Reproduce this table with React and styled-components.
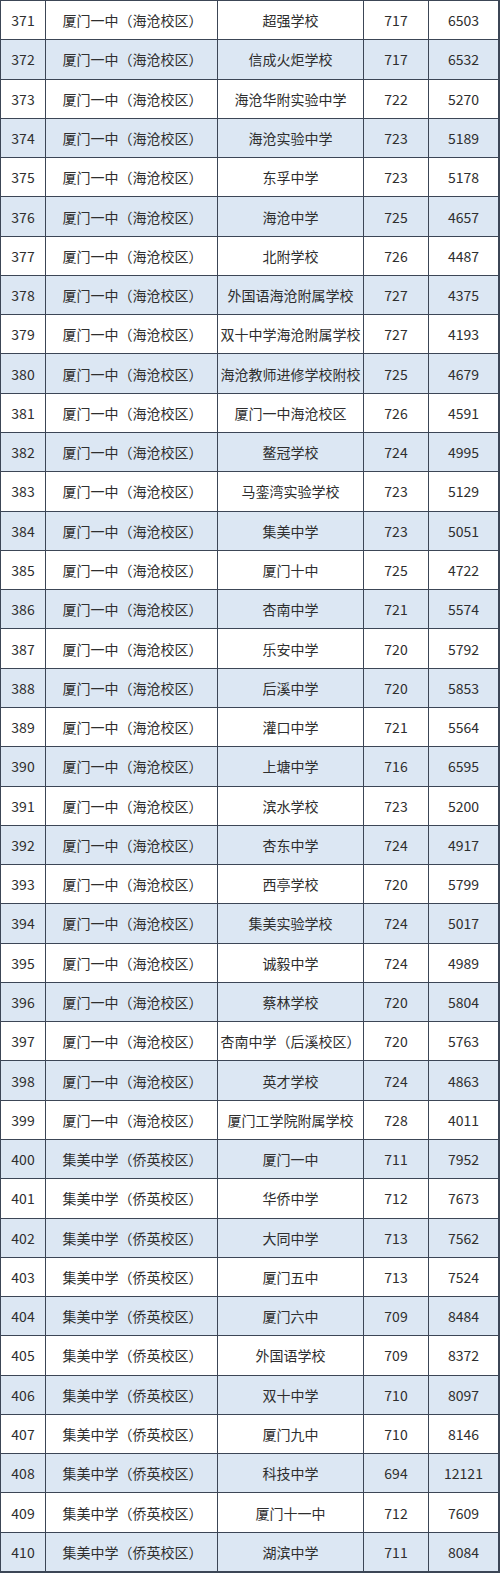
import React from "react";
import styled, { createGlobalStyle } from "styled-components";

const Global = createGlobalStyle`
  html, body { margin: 0; padding: 0; background: #ffffff; }
  body { font-family: "Noto Sans CJK SC", "Noto Sans", sans-serif; }
`;

const A = "厦门一中（海沧校区）";
const B = "集美中学（侨英校区）";

const rows = [
  [371, A, "超强学校", 717, 6503],
  [372, A, "信成火炬学校", 717, 6532],
  [373, A, "海沧华附实验中学", 722, 5270],
  [374, A, "海沧实验中学", 723, 5189],
  [375, A, "东孚中学", 723, 5178],
  [376, A, "海沧中学", 725, 4657],
  [377, A, "北附学校", 726, 4487],
  [378, A, "外国语海沧附属学校", 727, 4375],
  [379, A, "双十中学海沧附属学校", 727, 4193],
  [380, A, "海沧教师进修学校附校", 725, 4679],
  [381, A, "厦门一中海沧校区", 726, 4591],
  [382, A, "鳌冠学校", 724, 4995],
  [383, A, "马銮湾实验学校", 723, 5129],
  [384, A, "集美中学", 723, 5051],
  [385, A, "厦门十中", 725, 4722],
  [386, A, "杏南中学", 721, 5574],
  [387, A, "乐安中学", 720, 5792],
  [388, A, "后溪中学", 720, 5853],
  [389, A, "灌口中学", 721, 5564],
  [390, A, "上塘中学", 716, 6595],
  [391, A, "滨水学校", 723, 5200],
  [392, A, "杏东中学", 724, 4917],
  [393, A, "西亭学校", 720, 5799],
  [394, A, "集美实验学校", 724, 5017],
  [395, A, "诚毅中学", 724, 4989],
  [396, A, "蔡林学校", 720, 5804],
  [397, A, "杏南中学（后溪校区）", 720, 5763],
  [398, A, "英才学校", 724, 4863],
  [399, A, "厦门工学院附属学校", 728, 4011],
  [400, B, "厦门一中", 711, 7952],
  [401, B, "华侨中学", 712, 7673],
  [402, B, "大同中学", 713, 7562],
  [403, B, "厦门五中", 713, 7524],
  [404, B, "厦门六中", 709, 8484],
  [405, B, "外国语学校", 709, 8372],
  [406, B, "双十中学", 710, 8097],
  [407, B, "厦门九中", 710, 8146],
  [408, B, "科技中学", 694, 12121],
  [409, B, "厦门十一中", 712, 7609],
  [410, B, "湖滨中学", 711, 8084],
];

const Table = styled.div`
  width: 500px;
  height: 1573px;
  box-sizing: border-box;
  display: grid;
  grid-template-columns: 44px 171px 145px 64px 1fr;
  grid-template-rows: repeat(40, 1fr);
  background: #3c4656;
  gap: 1px;
  border: 1px solid #3c4656;
  border-right-width: 2px;
  border-bottom-width: 2px;
`;

const Cell = styled.div`
  background: ${(p) => (p.$shade ? "#dce7f3" : "#ffffff")};
  color: #2e2e2e;
  font-size: 14px;
  display: flex;
  align-items: center;
  justify-content: center;
  white-space: nowrap;
  padding-left: ${(p) => (p.$shift ? "2px" : "0")};
`;

export default function App() {
  return (
    <>
      <Global />
      <Table>
        {rows.map((r, i) =>
          r.map((v, j) => (
            <Cell key={`${i}-${j}`} $shade={i % 2 === 1} $shift={j === 1}>
              {v}
            </Cell>
          ))
        )}
      </Table>
    </>
  );
}
